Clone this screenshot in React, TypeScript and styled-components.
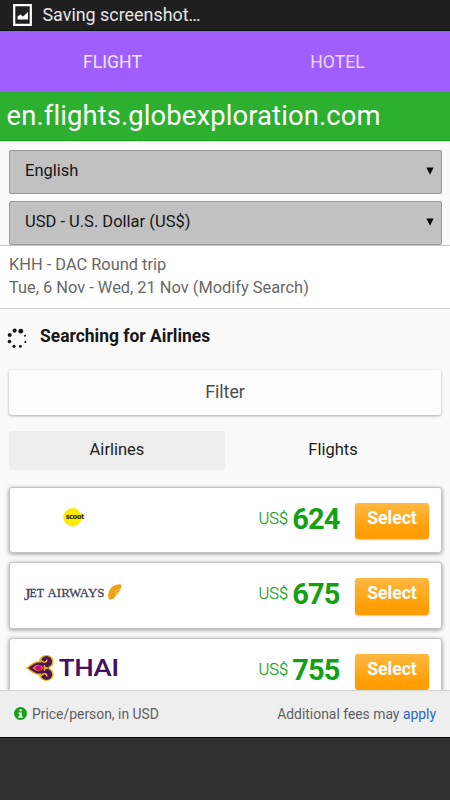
import React from 'react';
import styled, { createGlobalStyle } from 'styled-components';

const GlobalStyle = createGlobalStyle`
  * { box-sizing: border-box; }
  body { margin: 0; background: #303030; font-family: Roboto, sans-serif; }
`;

const Screen = styled.div`
  width: 450px;
  height: 800px;
  display: flex;
  flex-direction: column;
  overflow: hidden;
  background: #303030;
`;

const StatusBar = styled.header`
  height: 31px;
  flex: none;
  display: flex;
  align-items: center;
  gap: 9.5px;
  padding: 0 0 1px 13px;
  background: #1f1f1f;
  border-bottom: 1px solid #07140a;
  color: #e6e6e6;
  font-size: 17.9px;
`;

const TopTabs = styled.nav`
  height: 61px;
  flex: none;
  display: grid;
  grid-template-columns: 225px 225px;
  background: #a15eff;
`;

const TopTab = styled.div<{ $active?: boolean }>`
  text-align: center;
  line-height: 62px;
  font-size: 17.6px;
  color: ${(p) => (p.$active ? '#f1e8ff' : '#e6d8ff')};
  border-bottom: ${(p) => (p.$active ? '3px solid #80c6c6' : 'none')};
`;

const SiteBar = styled.div`
  height: 49px;
  flex: none;
  padding-left: 6.5px;
  background: #2daf2f;
  border-bottom: 1px solid #0aa60a;
  color: #fff;
  font-size: 27.4px;
  font-variant-ligatures: none;
  letter-spacing: 0.12px;
  line-height: 48px;
`;

const Page = styled.main`
  height: 549px;
  flex: none;
  overflow: hidden;
  background: #fafafa;
`;

const Selects = styled.div`
  height: 104px;
  display: flex;
  flex-direction: column;
  gap: 7px;
  padding: 9px 8px 0 9px;
`;

const SelectBox = styled.div`
  height: 44px;
  flex: none;
  display: flex;
  align-items: center;
  justify-content: space-between;
  padding: 0 7px 3px 15px;
  border: 1px solid #999;
  border-radius: 2px;
  background: #c1c1c1;
  color: #161616;
  font-size: 16.5px;
`;

const Summary = styled.section`
  height: 64px;
  padding: 8px 9px 0;
  background: #fff;
  border-top: 1px solid #c4c4c4;
  border-bottom: 1px solid #cfcfcf;
  color: #686868;
  font-size: 16.4px;
  line-height: 22.5px;
`;

const Progress = styled.div`
  height: 61px;
  display: flex;
  align-items: center;
  gap: 12px;
  padding: 0 0 7px 7px;
  color: #161616;
  font-size: 17.45px;
  font-weight: 700;
`;

const Spinner = styled.svg`
  position: relative;
  top: 3px;
`;

const FilterButton = styled.div`
  height: 45px;
  margin: 0 9px;
  border-radius: 3px;
  background: #fdfdfd;
  box-shadow: 0 1px 3px rgba(0, 0, 0, 0.32);
  color: #4c4c4c;
  font-size: 17.8px;
  line-height: 43px;
  text-align: center;
`;

const ListTabs = styled.div`
  height: 39px;
  display: grid;
  grid-template-columns: 216px 216px;
  margin: 16px 9px;
`;

const ListTab = styled.div<{ $active?: boolean }>`
  border-radius: 3px;
  background: ${(p) => (p.$active ? '#eeeeee' : 'transparent')};
  color: #1c1c1c;
  font-size: 16.5px;
  line-height: 37px;
  text-align: center;
`;

const Results = styled.div`
  display: flex;
  flex-direction: column;
  gap: 9px;
  padding: 0.8px 8px 0 9px;
`;

const Card = styled.article`
  height: 66.5px;
  display: flex;
  align-items: flex-start;
  padding: 15px 12px 0 7px;
  border: 1px solid #c4c4c4;
  border-radius: 3px;
  background: #fff;
  box-shadow: 0 1px 4px rgba(0, 0, 0, 0.4);
`;

const Logo = styled.svg`
  width: 120px;
  height: 32px;
  flex: none;
`;

const Price = styled.div`
  flex: 1;
  display: flex;
  justify-content: flex-end;
  gap: 4px;
  margin-right: 15.5px;
  color: #13a013;
`;

const Currency = styled.span`
  font-size: 16.5px;
  font-weight: 300;
  line-height: 32px;
  -webkit-text-stroke: 0.2px #13a013;
`;

const Amount = styled.span`
  font-size: 29px;
  font-weight: 700;
  letter-spacing: -0.9px;
  line-height: 33px;
`;

const SelectButton = styled.div`
  width: 74px;
  height: 36.5px;
  border-radius: 3px;
  background: linear-gradient(#ffb842, #ff9e02 80%);
  box-shadow: 0 1px 2px rgba(0, 0, 0, 0.22);
  color: #fff;
  font-size: 17.6px;
  font-weight: 700;
  line-height: 31px;
  text-align: center;
`;

const Footer = styled.footer`
  height: 48px;
  flex: none;
  display: flex;
  align-items: center;
  padding: 0 14px 1px;
  background: #eee;
  border-top: 1px solid #d5d5d5;
  border-bottom: 1px solid #050505;
  color: #5e5e5e;
  font-size: 13.9px;
`;

const FooterIcon = styled.svg`
  margin-right: 5px;
`;

const Fees = styled.span`
  margin-left: auto;
`;

const FeesLink = styled.span`
  color: #1f66cc;
`;

const spinnerDots = [
  [14.6, 2.6, 2.1], [20.8, 3.2, 2.4], [25, 7.8, 1], [25.3, 14, 1.1],
  [20.4, 18.4, 1.4], [14, 18.3, 1.6], [9.5, 13.6, 1.8], [9.7, 7, 2],
];

function Scoot() {
  return (
    <Logo viewBox="0 0 120 32">
      <circle cx="55.5" cy="14.2" r="9.2" fill="#ffea00" />
      <text x="49" y="16.2" textLength="18" lengthAdjust="spacingAndGlyphs" fontFamily="Lato, sans-serif" fontSize="7" fontWeight="900" fill="#25220b" stroke="#25220b" strokeWidth=".2">scoot</text>
    </Logo>
  );
}

function JetAirways() {
  return (
    <Logo viewBox="0 0 120 32">
      <g fontFamily="'Liberation Serif', serif" fill="#42425c" stroke="#42425c" strokeWidth=".3">
        <text x="7" y="22" fontSize="17">J</text>
        <text x="12.5" y="19.3" textLength="14.500" lengthAdjust="spacingAndGlyphs" fontSize="13.500">ET</text>
        <text x="30.500" y="19.3" textLength="57" lengthAdjust="spacingAndGlyphs" fontSize="13.500">AIRWAYS</text>
      </g>
      <path d="M92 21C90 17 92 12 95 9c4-3 10-4 9.500-.5L103.500 11l-.5 2-1.500 1-.4 2-1.600.6c-2 4-5 6-7.500 4.400Z" fill="#f0a010" />
      <path d="m98 13.500 6-2.700M98 15.500l4-1" stroke="#ffe2a0" strokeWidth=".6" />
    </Logo>
  );
}

function Thai() {
  return (
    <Logo viewBox="0 0 120 32">
      <path d="M8.500 14C13 11.500 15.500 7.600 22 7c1-8 15-8 14.500 1 0 3-1.600 5-4.500 6 2.900 1 4.500 3 4.500 6 .5 9-13.500 9-14.500 1C15.500 20.400 13 16.500 8.500 14Z" fill="#edb911" />
      <circle cx="29.500" cy="7.600" r="5.600" fill="#4b125e" />
      <circle cx="29.500" cy="20.400" r="5.600" fill="#4b125e" />
      <path d="M11 14c5-3 7-6 12-5.500 4 .4 7 4 9 5.500-2 1.500-5 5.100-9 5.500-5 .5-7-2.500-12-5.500Z" fill="#4b125e" />
      <path d="M24 6c1.500 3.500 6 2.500 6-.5M24 22c1.500-3.500 6-2.500 6 .5M28 11.500c-2 1 0 2.500 3 2.500-3 0-5 1.500-3 2.500" fill="none" stroke="#edb911" strokeWidth="1.400" />
      <path d="M15.500 14q6-6.500 11 0q-5 6.500-11 0Z" fill="#e99522" />
      <path d="M17.500 14q4.500-5.500 7.500 0q-3 5.500-7.500 0Z" fill="#d00086" />
      <text x="42" y="22.200" textLength="60" lengthAdjust="spacingAndGlyphs" fontFamily="Lato, sans-serif" fontSize="23" fontWeight="700" fill="#45115f">THAI</text>
    </Logo>
  );
}

const offers = [
  { id: 'scoot', logo: <Scoot />, amount: 624 },
  { id: 'jet', logo: <JetAirways />, amount: 675 },
  { id: 'thai', logo: <Thai />, amount: 755 },
];

function Arrow() {
  return <svg width="8" height="8" viewBox="0 0 8 8"><path d="M.4.5h7.2L4 7.7Z" fill="#080808" /></svg>;
}

export default function App() {
  return (
    <Screen>
      <GlobalStyle />
      <StatusBar>
        <svg width="20" height="22" viewBox="0 0 20 22">
          <path d="M1.200 1.200h16.600v19.600H1.200Z" fill="none" stroke="#fff" strokeWidth="2.200" />
          <path d="M4.500 15.500v-3l3-2 2.500 2 5-4.500v7.500Z" fill="#fff" />
        </svg>
        <span>Saving screenshot…</span>
      </StatusBar>
      <TopTabs>
        <TopTab $active>FLIGHT</TopTab>
        <TopTab>HOTEL</TopTab>
      </TopTabs>
      <SiteBar>en.flights.globexploration.com</SiteBar>
      <Page>
        <Selects>
          <SelectBox><span>English</span><Arrow /></SelectBox>
          <SelectBox><span>USD - U.S. Dollar (US$)</span><Arrow /></SelectBox>
        </Selects>
        <Summary>
          <div>KHH - DAC Round trip</div>
          <div>Tue, 6 Nov - Wed, 21 Nov (Modify Search)</div>
        </Summary>
        <Progress>
          <Spinner width="21" height="22" viewBox="7 0 21 22">
            {spinnerDots.map(([x, y, r]) => <circle key={`${x}-${y}`} cx={x} cy={y} r={r} fill="#151515" />)}
          </Spinner>
          <span>Searching for Airlines</span>
        </Progress>
        <FilterButton>Filter</FilterButton>
        <ListTabs>
          <ListTab $active>Airlines</ListTab>
          <ListTab>Flights</ListTab>
        </ListTabs>
        <Results>
          {offers.map((offer) => (
            <Card key={offer.id}>
              {offer.logo}
              <Price><Currency>US$</Currency><Amount>{offer.amount}</Amount></Price>
              <SelectButton>Select</SelectButton>
            </Card>
          ))}
        </Results>
      </Page>
      <Footer>
        <FooterIcon width="13" height="13" viewBox="0 0 12 12">
          <circle cx="6" cy="6" r="6" fill="#13a013" />
          <path d="M5 2h2.200v2H5ZM4.200 5h3v3.500H8V10H4V8.500h1v-2h-.8Z" fill="#fff" />
        </FooterIcon>
        <span>Price/person, in USD</span>
        <Fees>Additional fees may <FeesLink>apply</FeesLink></Fees>
      </Footer>
    </Screen>
  );
}
